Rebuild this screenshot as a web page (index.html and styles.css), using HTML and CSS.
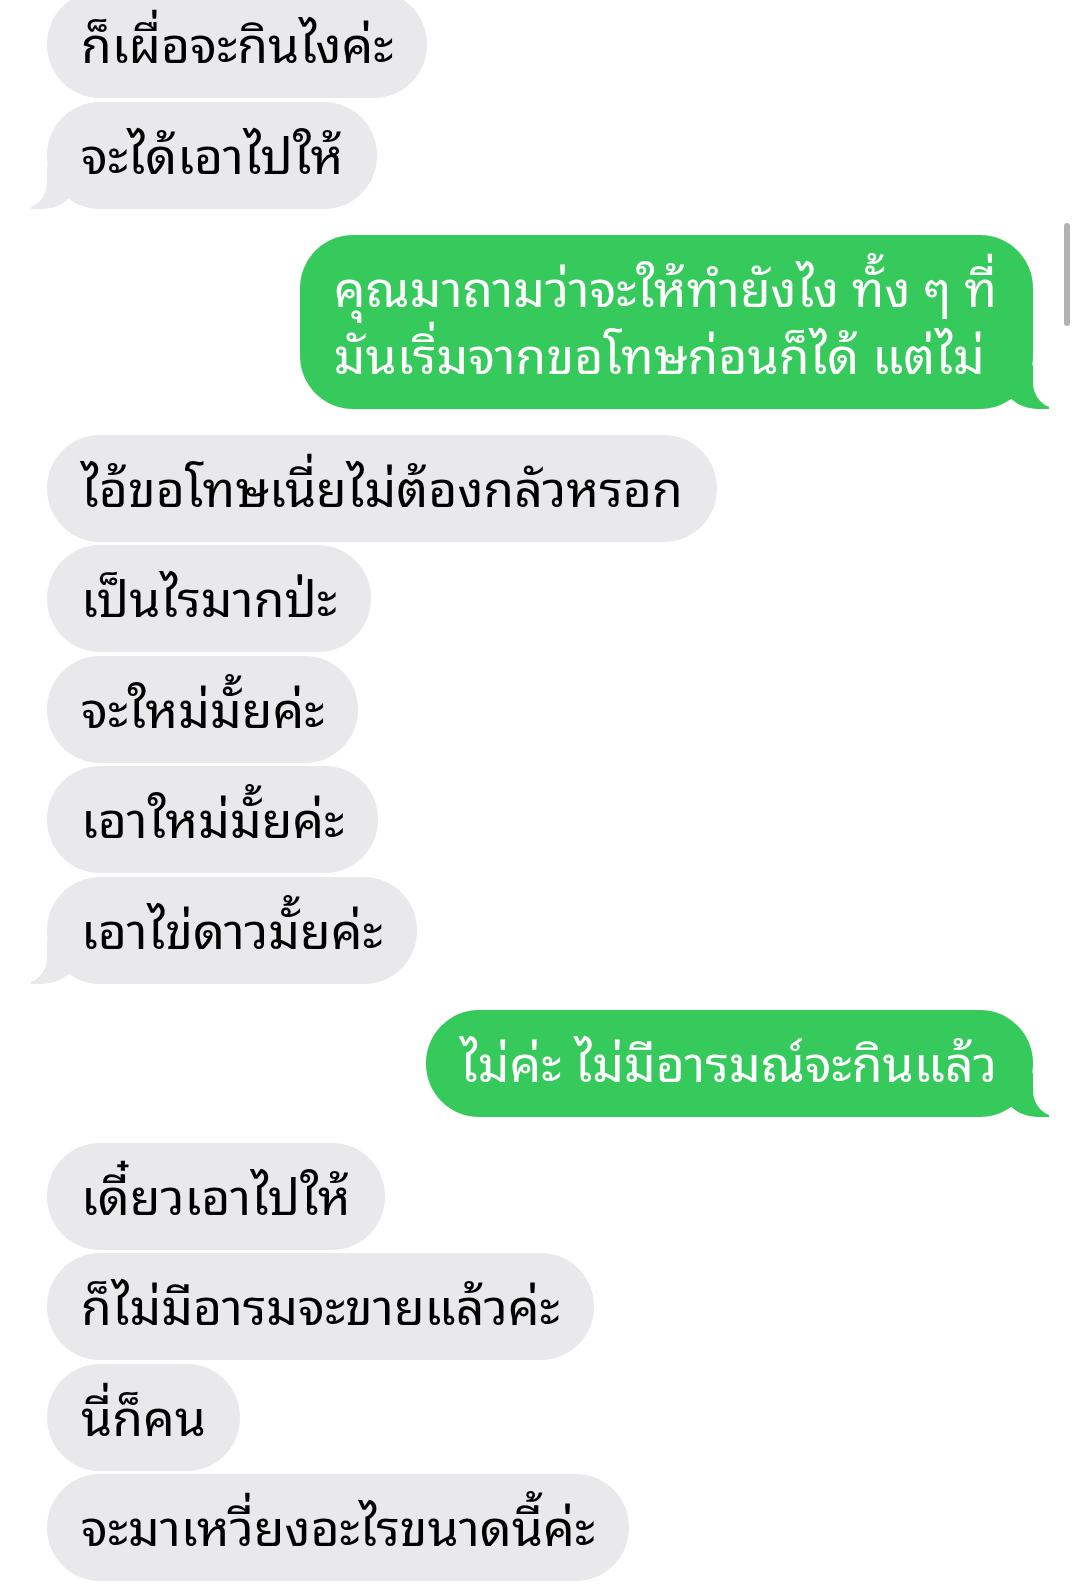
FILE: index.html
```html
<!DOCTYPE html>
<html lang="th">
<head>
<meta charset="UTF-8" />
<meta name="viewport" content="width=device-width, initial-scale=1" />
<title>Messages</title>
<link rel="stylesheet" href="styles.css">
</head>
<body>
<div id="chat">
  <div class="group them">
    <div class="bubble">ก็เผื่อจะกินไงค่ะ</div>
    <div class="bubble last">จะได้เอาไปให้</div>
  </div>
  <div class="group me">
    <div class="bubble last">คุณมาถามว่าจะให้ทำยังไง ทั้ง ๆ ที่<br>มันเริ่มจากขอโทษก่อนก็ได้ แต่ไม่</div>
  </div>
  <div class="group them">
    <div class="bubble">ไอ้ขอโทษเนี่ยไม่ต้องกลัวหรอก</div>
    <div class="bubble">เป็นไรมากป่ะ</div>
    <div class="bubble">จะใหม่มั้ยค่ะ</div>
    <div class="bubble">เอาใหม่มั้ยค่ะ</div>
    <div class="bubble last">เอาไข่ดาวมั้ยค่ะ</div>
  </div>
  <div class="group me">
    <div class="bubble last">ไม่ค่ะ ไม่มีอารมณ์จะกินแล้ว</div>
  </div>
  <div class="group them">
    <div class="bubble">เดี๋ยวเอาไปให้</div>
    <div class="bubble">ก็ไม่มีอารมจะขายแล้วค่ะ</div>
    <div class="bubble">นี่ก็คน</div>
    <div class="bubble">จะมาเหวี่ยงอะไรขนาดนี้ค่ะ</div>
  </div>
</div>
<div class="scrollbar"></div>
</body>
</html>
```

FILE: styles.css
```css
body {
  margin: 0;
  background: #fff;
  font-family: "Noto Sans Thai Looped", "Noto Sans Thai", "Noto Sans", sans-serif;
  overflow: hidden;
}
#chat {
  display: flex;
  flex-direction: column;
  gap: 26px;
  margin-top: -9px;
  padding: 0 47px;
}
.group {
  display: flex;
  flex-direction: column;
  gap: 3.5px;
}
.them {
  align-items: flex-start;
}
.me {
  align-items: flex-end;
}
.bubble {
  position: relative;
  font-size: 50px;
  line-height: 67px;
  padding: 16px 34px 24px;
  border-radius: 53px;
}
.them .bubble {
  background: #e9e9eb;
  color: #000;
}
.me .bubble {
  background: #36c95b;
  color: #fff;
  padding-right: 36px;
}
/* tails */
.bubble.last::before,
.bubble.last::after {
  content: "";
  position: absolute;
  bottom: 0;
  height: 44px;
}
.them .last::before {
  left: -16px;
  width: 50px;
  background: #e9e9eb;
  border-bottom-right-radius: 38px;
}
.them .last::after {
  left: -26px;
  width: 26px;
  background: #fff;
  border-bottom-right-radius: 26px;
}
.me .last::before {
  right: -16px;
  width: 50px;
  background: #36c95b;
  border-bottom-left-radius: 38px;
}
.me .last::after {
  right: -26px;
  width: 26px;
  background: #fff;
  border-bottom-left-radius: 26px;
}
.scrollbar {
  position: absolute;
  top: 223px;
  left: 1064px;
  width: 6px;
  height: 103px;
  border-radius: 3px;
  background: #b3b3b3;
}
```
